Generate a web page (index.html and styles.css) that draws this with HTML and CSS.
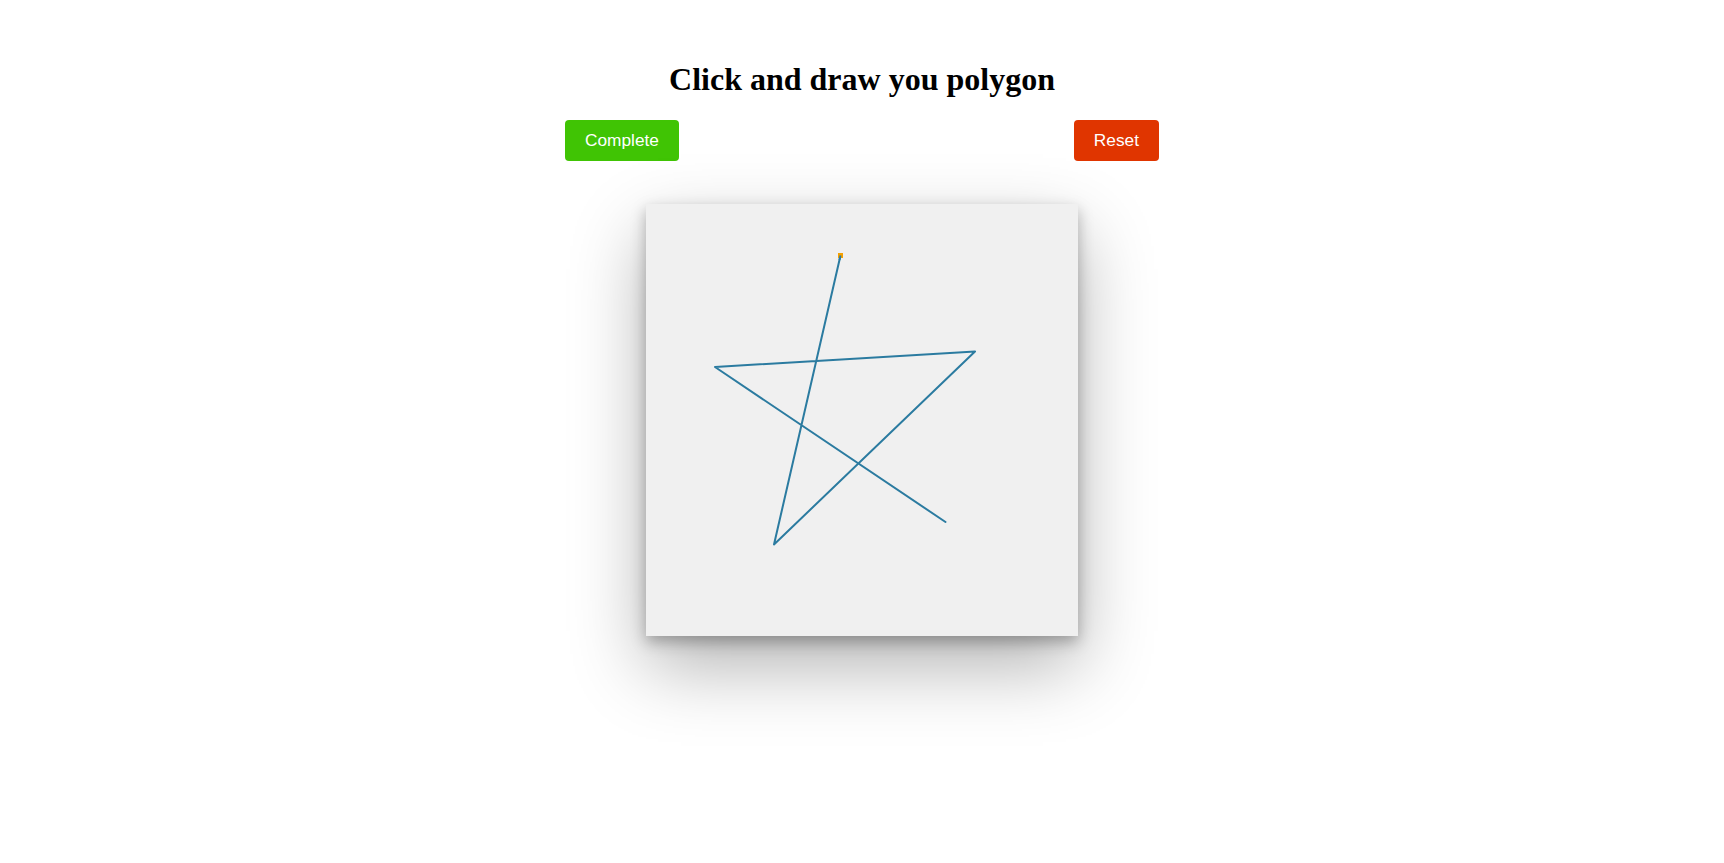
FILE: index.html
```html
<!DOCTYPE html>
<html lang="en">
<head>
<meta charset="utf-8">
<title>Polygon</title>
<link rel="stylesheet" href="styles.css">
</head>
<body>
<main class="app">
  <h1 class="title">Click and draw you polygon</h1>
  <div class="toolbar">
    <button class="btn btn-complete" type="button">Complete</button>
    <button class="btn btn-reset" type="button">Reset</button>
  </div>
  <div class="board">
    <svg class="drawing" width="432" height="432" viewBox="0 0 432 432">
      <polyline points="194.5,51.5 128,340.5 329,147.5 69,163 299.5,318" fill="none" stroke="#2b7ba0" stroke-width="2" stroke-linejoin="round" stroke-linecap="round"/>
      <rect x="192" y="49" width="5" height="5" fill="#f5a000"/>
      <line x1="194.5" y1="51.5" x2="193.4" y2="56" stroke="#2b7ba0" stroke-width="2"/>
    </svg>
  </div>
</main>
</body>
</html>
```

FILE: styles.css
```css
html, body {
  margin: 0;
  padding: 0;
  background: #ffffff;
}

body {
  min-height: 100vh;
}

.app {
  display: flex;
  flex-direction: column;
  align-items: center;
  padding-top: 39px;
  padding-bottom: 200px;
}

.title {
  font-family: "Liberation Serif", "Times New Roman", serif;
  font-weight: bold;
  font-size: 32px;
  margin: 21.5px 0 22px;
  color: #000;
}

.toolbar {
  width: 594px;
  display: flex;
  justify-content: space-between;
}

.btn {
  font-family: "Liberation Sans", Arial, sans-serif;
  font-size: 17.3px;
  color: #ffffff;
  border: none;
  border-radius: 4px;
  height: 41px;
  padding: 0 20px;
  cursor: pointer;
}

.btn-complete {
  background: #40c404;
}

.btn-reset {
  background: #e03500;
}

.board {
  margin-top: 43px;
  width: 432px;
  height: 432px;
  background: #f0f0f0;
  box-shadow: 0 30px 70px rgba(0, 0, 0, 0.3), 0 6px 14px rgba(0, 0, 0, 0.28);
}

.drawing {
  display: block;
}
```
